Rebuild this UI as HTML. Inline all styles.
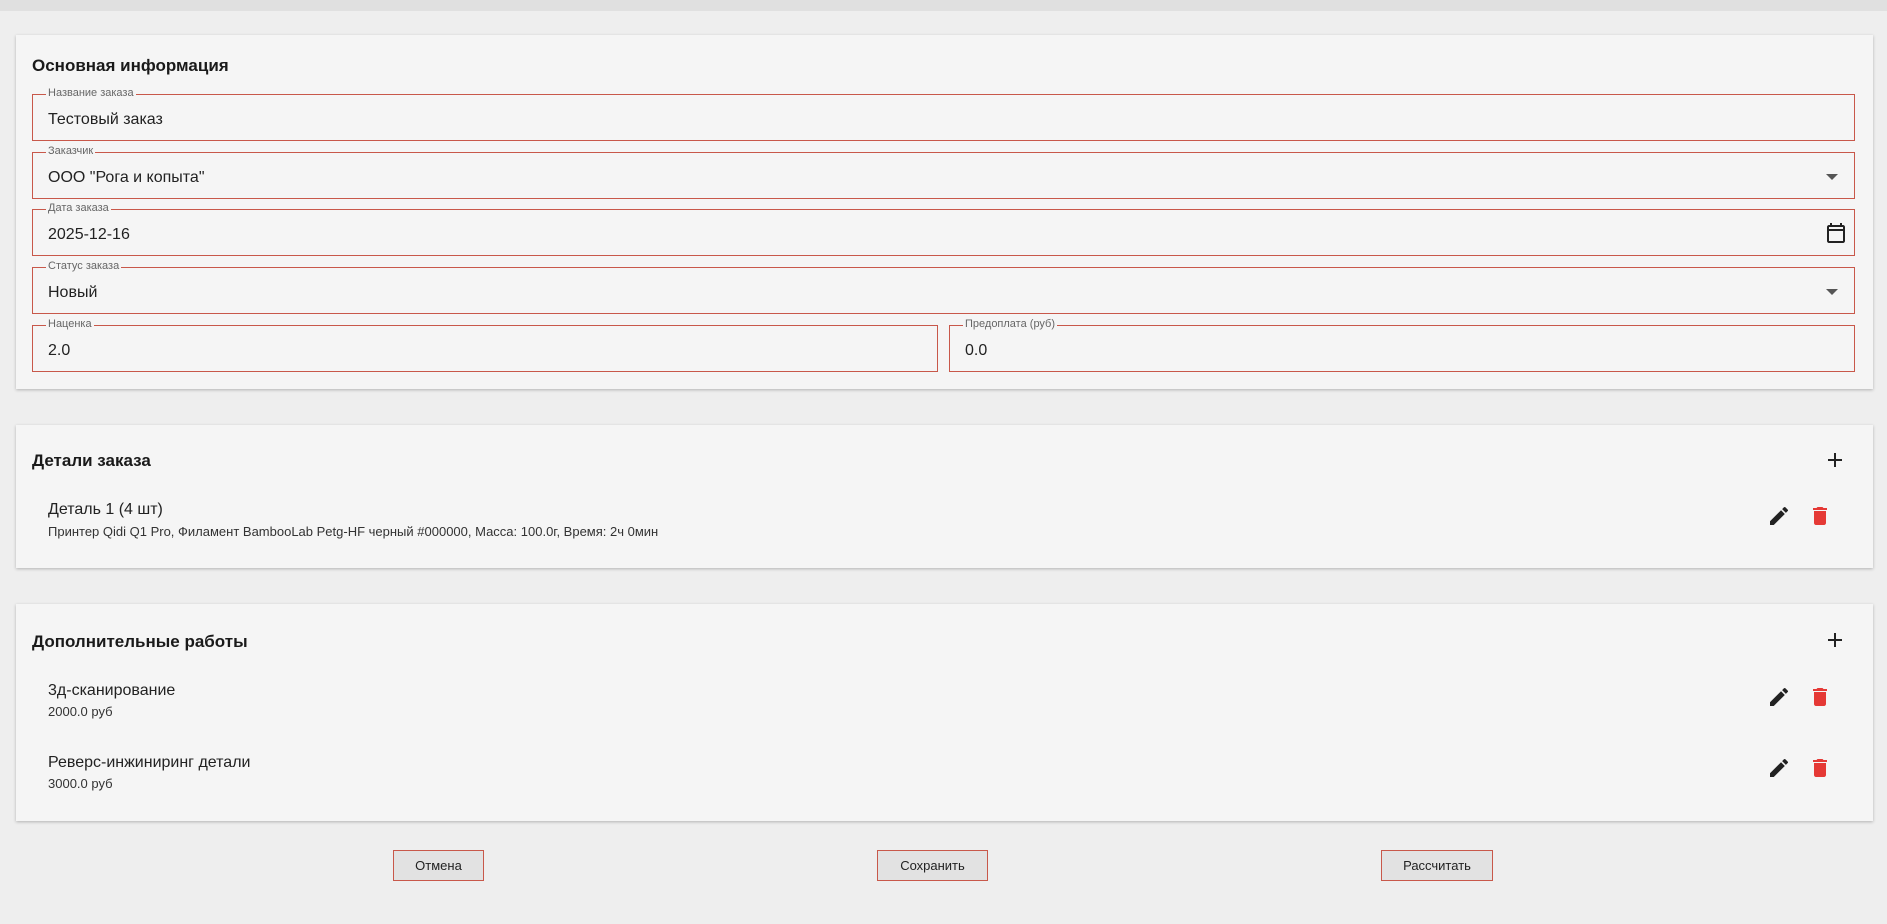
<!DOCTYPE html>
<html><head><meta charset="utf-8"><style>
*{box-sizing:border-box;margin:0;padding:0}
body{width:1887px;height:924px;background:#eeeeee;font-family:"Liberation Sans","DejaVu Sans",sans-serif;color:#1f1f1f;position:relative;overflow:hidden}
.top{position:absolute;left:0;top:0;width:1887px;height:11px;background:#e0e0e0}
.card{position:absolute;left:16px;width:1857px;background:#f5f5f5;box-shadow:0 1px 3px rgba(0,0,0,.25)}
.h{position:absolute;left:16px;font-size:17px;font-weight:bold;color:#1a1a1a}
.f{position:absolute;border:1px solid #c8584a;height:47px}
.f .l{position:absolute;left:13px;top:-8px;background:#f5f5f5;padding:0 2px;font-size:11px;color:#666}
.f .v{position:absolute;left:15px;top:16px;font-size:16px;color:#222}
.arr{position:absolute;right:16px;top:21px;width:0;height:0;border-left:6px solid transparent;border-right:6px solid transparent;border-top:6px solid #555}
.t1{position:absolute;left:32px;font-size:16px;color:#222}
.t2{position:absolute;left:32px;font-size:13px;color:#333}
.ic{position:absolute}
.btn{position:absolute;top:850px;height:31px;background:#e2e2e2;border:1px solid #c8584a;font-size:13px;text-align:center;line-height:29px;color:#222}
</style></head><body>
<div class="top"></div>

<div class="card" style="top:35px;height:354px">
 <div class="h" style="top:21px">Основная информация</div>
 <div class="f" style="left:16px;top:59px;width:1823px"><span class="l">Название заказа</span><span class="v">Тестовый заказ</span></div>
 <div class="f" style="left:16px;top:117px;width:1823px"><span class="l">Заказчик</span><span class="v">ООО "Рога и копыта"</span><div class="arr"></div></div>
 <div class="f" style="left:16px;top:174px;width:1823px"><span class="l">Дата заказа</span><span class="v">2025-12-16</span>
  <svg style="position:absolute;right:6px;top:11px" width="24" height="24" viewBox="0 0 24 24"><path fill="#222" d="M19 4h-1V2h-2v2H8V2H6v2H5c-1.1 0-2 .9-2 2v14c0 1.1.9 2 2 2h14c1.1 0 2-.9 2-2V6c0-1.1-.9-2-2-2zm0 16H5V10h14v10zm0-12H5V6h14v2z"/></svg></div>
 <div class="f" style="left:16px;top:232px;width:1823px"><span class="l">Статус заказа</span><span class="v">Новый</span><div class="arr"></div></div>
 <div class="f" style="left:16px;top:290px;width:906px"><span class="l">Наценка</span><span class="v">2.0</span></div>
 <div class="f" style="left:933px;top:290px;width:906px"><span class="l">Предоплата (руб)</span><span class="v">0.0</span></div>
</div>

<div class="card" style="top:425px;height:143px">
 <div class="h" style="top:26px">Детали заказа</div>
 <svg class="ic" style="left:1809px;top:25px" width="20" height="20" viewBox="0 0 20 20"><path d="M10 3v14M3 10h14" stroke="#222" stroke-width="2"/></svg>
 <div class="t1" style="top:76px">Деталь 1 (4 шт)</div>
 <div class="t2" style="top:99px">Принтер Qidi Q1 Pro, Филамент BambooLab Petg-HF черный #000000, Масса: 100.0г, Время: 2ч 0мин</div>
 <svg class="ic" style="left:1751px;top:79px" width="24" height="24" viewBox="0 0 24 24"><path fill="#222" d="M3 17.25V21h3.75L17.81 9.94l-3.75-3.75L3 17.25zM20.71 7.04a1 1 0 0 0 0-1.41l-2.34-2.34a1 1 0 0 0-1.41 0l-1.83 1.83 3.75 3.75 1.83-1.83z"/></svg>
 <svg class="ic" style="left:1792px;top:79px" width="24" height="24" viewBox="0 0 24 24"><path fill="#e53935" d="M6 19c0 1.1.9 2 2 2h8c1.1 0 2-.9 2-2V7H6v12zM19 4h-3.5l-1-1h-5l-1 1H5v2h14V4z"/></svg>
</div>

<div class="card" style="top:604px;height:217px">
 <div class="h" style="top:28px">Дополнительные работы</div>
 <svg class="ic" style="left:1809px;top:26px" width="20" height="20" viewBox="0 0 20 20"><path d="M10 3v14M3 10h14" stroke="#222" stroke-width="2"/></svg>
 <div class="t1" style="top:78px">3д-сканирование</div>
 <div class="t2" style="top:100px">2000.0 руб</div>
 <svg class="ic" style="left:1751px;top:81px" width="24" height="24" viewBox="0 0 24 24"><path fill="#222" d="M3 17.25V21h3.75L17.81 9.94l-3.75-3.75L3 17.25zM20.71 7.04a1 1 0 0 0 0-1.41l-2.34-2.34a1 1 0 0 0-1.41 0l-1.83 1.83 3.75 3.75 1.83-1.83z"/></svg>
 <svg class="ic" style="left:1792px;top:81px" width="24" height="24" viewBox="0 0 24 24"><path fill="#e53935" d="M6 19c0 1.1.9 2 2 2h8c1.1 0 2-.9 2-2V7H6v12zM19 4h-3.5l-1-1h-5l-1 1H5v2h14V4z"/></svg>
 <div class="t1" style="top:150px">Реверс-инжиниринг детали</div>
 <div class="t2" style="top:172px">3000.0 руб</div>
 <svg class="ic" style="left:1751px;top:152px" width="24" height="24" viewBox="0 0 24 24"><path fill="#222" d="M3 17.25V21h3.75L17.81 9.94l-3.75-3.75L3 17.25zM20.71 7.04a1 1 0 0 0 0-1.41l-2.34-2.34a1 1 0 0 0-1.41 0l-1.83 1.83 3.75 3.75 1.83-1.83z"/></svg>
 <svg class="ic" style="left:1792px;top:152px" width="24" height="24" viewBox="0 0 24 24"><path fill="#e53935" d="M6 19c0 1.1.9 2 2 2h8c1.1 0 2-.9 2-2V7H6v12zM19 4h-3.5l-1-1h-5l-1 1H5v2h14V4z"/></svg>
</div>

<div class="btn" style="left:393px;width:91px">Отмена</div>
<div class="btn" style="left:877px;width:111px">Сохранить</div>
<div class="btn" style="left:1381px;width:112px">Рассчитать</div>
</body></html>
